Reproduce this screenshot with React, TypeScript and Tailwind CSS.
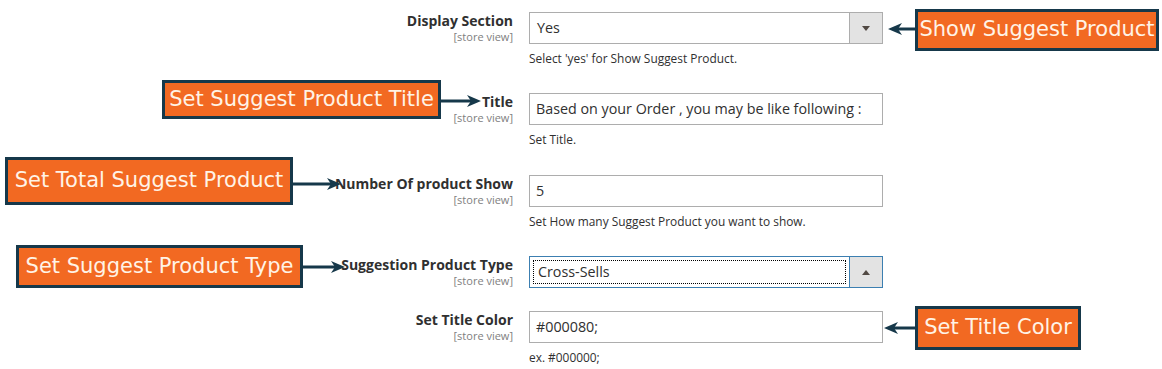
import React from "react";

const font = { fontFamily: '"Open Sans", "Liberation Sans", sans-serif' };

function Label({ title }: { title: string }) {
  return (
    <div className="w-[514px] shrink-0 pr-[1px] text-right">
      <div className="text-[14px] font-bold leading-[18px] text-[#303030]">{title}</div>
      <div className="text-[11px] leading-[14px] text-[#808080]">[store view]</div>
    </div>
  );
}

function Select({ value, open }: { value: string; open?: boolean }) {
  return (
    <div
      className={`flex h-[32px] w-[354px] border bg-white ${
        open ? "border-[#3c7fb1]" : "border-[#adadad]"
      }`}
    >
      <div className="flex flex-1 items-center p-[3px]">
        <div
          className={`flex h-full w-full items-center px-[4px] text-[14.3px] text-[#303030] ${
            open ? "border border-dotted border-black" : ""
          }`}
        >
          {value}
        </div>
      </div>
      <div
        className={`flex w-[33px] items-center justify-center border-l bg-[#e3e3e3] ${
          open ? "border-[#3c7fb1]" : "border-[#adadad]"
        }`}
      >
        <svg width="8" height="5" viewBox="0 0 8 5">
          {open ? <path d="M0 5 L4 0 L8 5 Z" fill="#514943" /> : <path d="M0 0 L8 0 L4 5 Z" fill="#514943" />}
        </svg>
      </div>
    </div>
  );
}

function Input({ value }: { value: string }) {
  return (
    <div className="flex h-[32px] w-[354px] items-center border border-[#adadad] bg-white px-[6px] text-[14.3px] text-[#303030]">
      {value}
    </div>
  );
}

function Note({ text }: { text: string }) {
  return <div className="mt-[6px] text-[11.9px] leading-[16px] text-[#303030]">{text}</div>;
}

function Callout({ text, className }: { text: string; className: string }) {
  return (
    <div
      className={`absolute flex items-center justify-center border-[3px] border-[#16384a] bg-[#f26922] text-[21px] whitespace-nowrap text-[#fff3e6] ${className}`}
      style={{ fontFamily: '"DejaVu Sans", sans-serif' }}
    >
      {text}
    </div>
  );
}

function Arrow({ className, width, left }: { className: string; width: number; left?: boolean }) {
  return (
    <svg className={`absolute ${className}`} width={width} height="12" viewBox={`0 0 ${width} 12`}>
      {left ? (
        <>
          <line x1="10" y1="6" x2={width} y2="6" stroke="#16384a" strokeWidth="3" />
          <path d="M0 6 L14 0 L10 6 L14 12 Z" fill="#16384a" />
        </>
      ) : (
        <>
          <line x1="0" y1="6" x2={width - 10} y2="6" stroke="#16384a" strokeWidth="3" />
          <path d={`M${width} 6 L${width - 14} 0 L${width - 10} 6 L${width - 14} 12 Z`} fill="#16384a" />
        </>
      )}
    </svg>
  );
}

export default function App() {
  return (
    <div className="relative h-[369px] w-[1162px] overflow-hidden bg-white pt-[12px]" style={font}>
      <div className="mb-[27px] flex gap-[15px]">
        <Label title="Display Section" />
        <div>
          <Select value="Yes" />
          <Note text="Select 'yes' for Show Suggest Product." />
        </div>
      </div>

      <div className="mb-[28px] flex gap-[15px]">
        <Label title="Title" />
        <div>
          <Input value="Based on your Order , you may be like following :" />
          <Note text="Set Title." />
        </div>
      </div>

      <div className="mb-[27px] flex gap-[15px]">
        <Label title="Number Of product Show" />
        <div>
          <Input value="5" />
          <Note text="Set How many Suggest Product you want to show." />
        </div>
      </div>

      <div className="mb-[23px] flex gap-[15px]">
        <Label title="Suggestion Product Type" />
        <div>
          <Select value="Cross-Sells" open />
        </div>
      </div>

      <div className="flex gap-[15px]">
        <Label title="Set Title Color" />
        <div>
          <Input value="#000080;" />
          <Note text="ex. #000000;" />
        </div>
      </div>

      {/* annotations */}
      <Callout text="Show Suggest Product" className="left-[915px] top-[9px] h-[42px] w-[244px]" />
      <Arrow className="left-[888px] top-[23px]" width={28} left />

      <Callout text="Set Suggest Product Title" className="left-[162px] top-[80px] h-[39px] w-[279px]" />
      <Arrow className="left-[440px] top-[95px]" width={41} />

      <Callout text="Set Total Suggest Product" className="left-[5px] top-[157px] h-[48px] w-[288px]" />
      <Arrow className="left-[292px] top-[178px]" width={49} />

      <Callout text="Set Suggest Product Type" className="left-[16px] top-[245px] h-[43px] w-[287px]" />
      <Arrow className="left-[302px] top-[261px]" width={43} />

      <Callout text="Set Title Color" className="left-[915px] top-[306px] h-[44px] w-[166px]" />
      <Arrow className="left-[884px] top-[322px]" width={32} left />
    </div>
  );
}
